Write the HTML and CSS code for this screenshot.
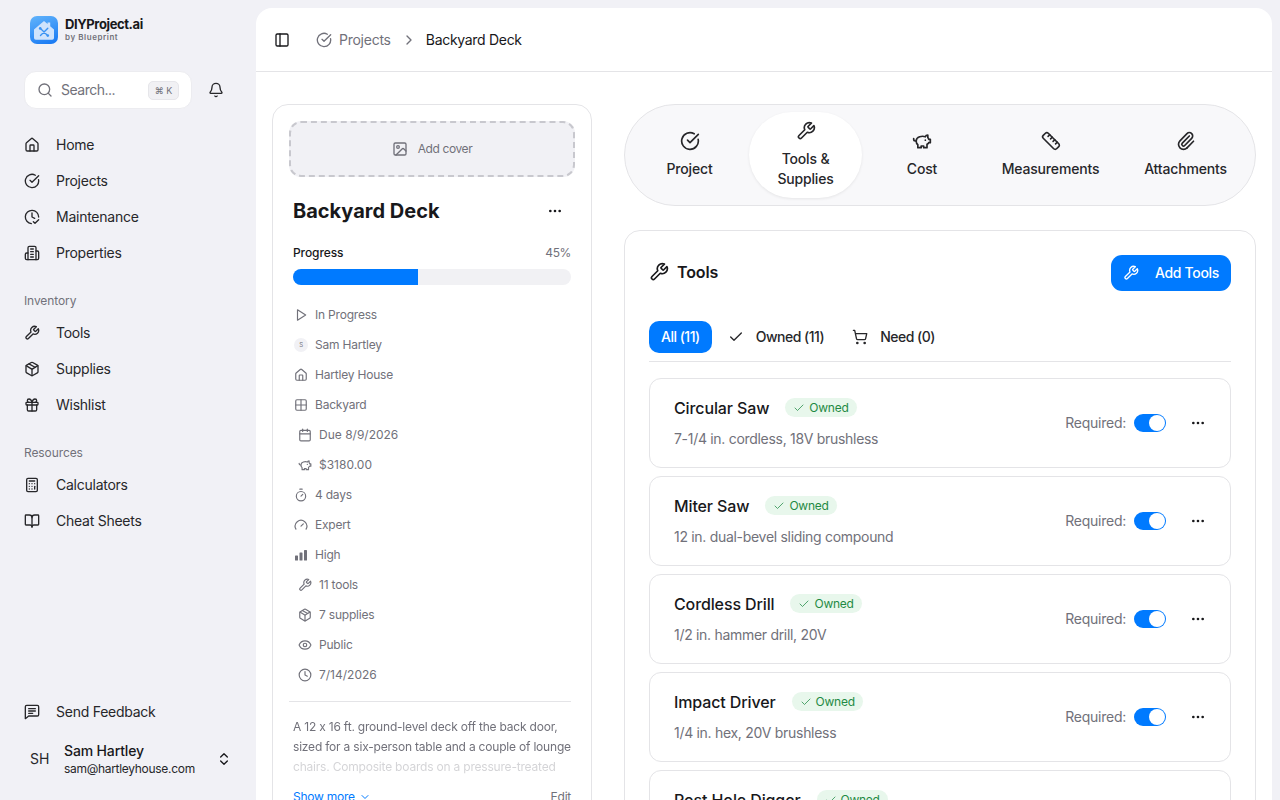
FILE: index.html
```html
<!DOCTYPE html>
<html lang="en">
<head>
  <meta charset="UTF-8">
  <title>Backyard Deck – DIYProject.ai</title>
  <link rel="stylesheet" href="styles.css">
</head>
<body>

  <!-- icon sprite -->
  <svg class="sprite" xmlns="http://www.w3.org/2000/svg">
    <symbol id="i-house" viewBox="0 0 24 24"><path d="M15 21v-8a1 1 0 0 0-1-1h-4a1 1 0 0 0-1 1v8"/><path d="M3 10a2 2 0 0 1 .709-1.528l7-5.999a2 2 0 0 1 2.582 0l7 5.999A2 2 0 0 1 21 10v9a2 2 0 0 1-2 2H5a2 2 0 0 1-2-2z"/></symbol>
    <symbol id="i-circle-check" viewBox="0 0 24 24"><path d="M21.801 10A10 10 0 1 1 17 3.335"/><path d="m9 11 3 3L22 4"/></symbol>
    <symbol id="i-clock-check" viewBox="0 0 24 24"><path d="M12 6v6l4 2"/><path d="M22 12a10 10 0 1 0-11 9.95"/><path d="m22 16-5.5 5.5L14 19"/></symbol>
    <symbol id="i-building" viewBox="0 0 24 24"><path d="M6 22V4a2 2 0 0 1 2-2h8a2 2 0 0 1 2 2v18Z"/><path d="M6 12H4a2 2 0 0 0-2 2v6a2 2 0 0 0 2 2h2"/><path d="M18 9h2a2 2 0 0 1 2 2v9a2 2 0 0 1-2 2h-2"/><path d="M10 6h4"/><path d="M10 10h4"/><path d="M10 14h4"/><path d="M10 18h4"/></symbol>
    <symbol id="i-wrench" viewBox="0 0 24 24"><path d="M14.7 6.3a1 1 0 0 0 0 1.4l1.6 1.6a1 1 0 0 0 1.4 0l3.77-3.77a6 6 0 0 1-7.94 7.94l-6.91 6.91a2.12 2.12 0 0 1-3-3l6.91-6.91a6 6 0 0 1 7.94-7.94l-3.76 3.76z"/></symbol>
    <symbol id="i-package" viewBox="0 0 24 24"><path d="M11 21.73a2 2 0 0 0 2 0l7-4A2 2 0 0 0 21 16V8a2 2 0 0 0-1-1.73l-7-4a2 2 0 0 0-2 0l-7 4A2 2 0 0 0 3 8v8a2 2 0 0 0 1 1.73z"/><path d="M12 22V12"/><path d="m3.3 7 7.703 4.734a2 2 0 0 0 1.994 0L20.7 7"/><path d="m7.5 4.27 9 5.15"/></symbol>
    <symbol id="i-gift" viewBox="0 0 24 24"><rect x="3" y="8" width="18" height="4" rx="1"/><path d="M12 8v13"/><path d="M19 12v7a2 2 0 0 1-2 2H7a2 2 0 0 1-2-2v-7"/><path d="M7.5 8a2.5 2.5 0 0 1 0-5A4.8 8 0 0 1 12 8a4.8 8 0 0 1 4.5-5 2.5 2.5 0 0 1 0 5"/></symbol>
    <symbol id="i-calculator" viewBox="0 0 24 24"><rect width="16" height="20" x="4" y="2" rx="2"/><line x1="8" x2="16" y1="6" y2="6"/><line x1="16" x2="16" y1="14" y2="18"/><path d="M16 10h.01"/><path d="M12 10h.01"/><path d="M8 10h.01"/><path d="M12 14h.01"/><path d="M8 14h.01"/><path d="M12 18h.01"/><path d="M8 18h.01"/></symbol>
    <symbol id="i-book" viewBox="0 0 24 24"><path d="M12 7v14"/><path d="M3 18a1 1 0 0 1-1-1V4a1 1 0 0 1 1-1h5a4 4 0 0 1 4 4 4 4 0 0 1 4-4h5a1 1 0 0 1 1 1v13a1 1 0 0 1-1 1h-6a3 3 0 0 0-3 3 3 3 0 0 0-3-3z"/></symbol>
    <symbol id="i-message" viewBox="0 0 24 24"><path d="M22 16a2 2 0 0 1-2 2H7l-5 4V4a2 2 0 0 1 2-2h16a2 2 0 0 1 2 2z"/><path d="M17 7H7"/><path d="M17 10.5H7"/><path d="M13 14H7"/></symbol>
    <symbol id="i-updown" viewBox="0 0 24 24"><path d="m7 15 5 5 5-5"/><path d="m7 9 5-5 5 5"/></symbol>
    <symbol id="i-bell" viewBox="0 0 24 24"><path d="M10.268 21a2 2 0 0 0 3.464 0"/><path d="M3.262 15.326A1 1 0 0 0 4 17h16a1 1 0 0 0 .74-1.673C19.41 13.956 18 12.499 18 8A6 6 0 0 0 6 8c0 4.499-1.411 5.956-2.738 7.326"/></symbol>
    <symbol id="i-search" viewBox="0 0 24 24"><circle cx="11" cy="11" r="8"/><path d="m21 21-4.3-4.3"/></symbol>
    <symbol id="i-panel" viewBox="0 0 24 24"><rect width="18" height="18" x="3" y="3" rx="2"/><path d="M9 3v18"/></symbol>
    <symbol id="i-chevron-right" viewBox="0 0 24 24"><path d="m9 18 6-6-6-6"/></symbol>
    <symbol id="i-chevron-down" viewBox="0 0 24 24"><path d="m6 9 6 6 6-6"/></symbol>
    <symbol id="i-image" viewBox="0 0 24 24"><rect width="18" height="18" x="3" y="3" rx="2"/><circle cx="9" cy="9" r="2"/><path d="m21 15-3.086-3.086a2 2 0 0 0-2.828 0L6 21"/></symbol>
    <symbol id="i-dots" viewBox="0 0 24 24"><circle cx="12" cy="12" r="1"/><circle cx="19" cy="12" r="1"/><circle cx="5" cy="12" r="1"/></symbol>
    <symbol id="i-play" viewBox="0 0 24 24"><polygon points="6 3 20 12 6 21 6 3"/></symbol>
    <symbol id="i-grid" viewBox="0 0 24 24"><path d="M12 3v18"/><path d="M3 12h18"/><rect x="3" y="3" width="18" height="18" rx="2"/></symbol>
    <symbol id="i-calendar" viewBox="0 0 24 24"><path d="M8 2v4"/><path d="M16 2v4"/><rect width="18" height="18" x="3" y="4" rx="2"/><path d="M3 10h18"/></symbol>
    <symbol id="i-piggy" viewBox="0 0 24 24"><path d="M19 5c-1.5 0-2.8 1.4-3 2-3.5-1.5-11-.3-11 5 0 1.8 0 3 2 4.5V20h4v-2h3v2h4v-4c1-.5 1.7-1 2-2h2v-4h-2c0-1-.5-1.5-1-2V5z"/><path d="M2 9v1c0 1.1.9 2 2 2h1"/><path d="M16 11h.01"/></symbol>
    <symbol id="i-timer" viewBox="0 0 24 24"><line x1="10" x2="14" y1="2" y2="2"/><line x1="12" x2="15" y1="14" y2="11"/><circle cx="12" cy="14" r="8"/></symbol>
    <symbol id="i-gauge" viewBox="0 0 24 24"><path d="m12 14 4-4"/><path d="M3.34 19a10 10 0 1 1 17.32 0"/></symbol>
    <symbol id="i-eye" viewBox="0 0 24 24"><path d="M2.062 12.348a1 1 0 0 1 0-.696 10.75 10.75 0 0 1 19.876 0 1 1 0 0 1 0 .696 10.75 10.75 0 0 1-19.876 0"/><circle cx="12" cy="12" r="3"/></symbol>
    <symbol id="i-clock" viewBox="0 0 24 24"><circle cx="12" cy="12" r="10"/><polyline points="12 6 12 12 16 14"/></symbol>
    <symbol id="i-ruler" viewBox="0 0 24 24"><path d="M21.3 15.3a2.4 2.4 0 0 1 0 3.4l-2.6 2.6a2.4 2.4 0 0 1-3.4 0L2.7 8.7a2.41 2.41 0 0 1 0-3.4l2.6-2.6a2.41 2.41 0 0 1 3.4 0Z"/><path d="m14.5 12.5 2-2"/><path d="m11.5 9.5 2-2"/><path d="m8.5 6.5 2-2"/><path d="m17.5 15.5 2-2"/></symbol>
    <symbol id="i-clip" viewBox="0 0 24 24"><path d="M13.234 20.252 21 12.3"/><path d="m16 6-8.414 8.586a2 2 0 0 0 0 2.828 2 2 0 0 0 2.828 0l8.414-8.586a4 4 0 0 0 0-5.656 4 4 0 0 0-5.656 0l-8.415 8.585a6 6 0 1 0 8.486 8.486"/></symbol>
    <symbol id="i-check" viewBox="0 0 24 24"><path d="M20 6 9 17l-5-5"/></symbol>
    <symbol id="i-cart" viewBox="0 0 24 24"><circle cx="8" cy="21" r="1"/><circle cx="19" cy="21" r="1"/><path d="M2.05 2.05h2l2.66 12.42a2 2 0 0 0 2 1.58h9.78a2 2 0 0 0 1.95-1.57l1.65-7.43H5.12"/></symbol>
  </svg>

  <aside class="sidebar">
    <div class="brand">
      <div class="brand-logo">
        <svg viewBox="0 0 28 28" width="28" height="28">
          <path d="M14 5l3.6 3V6.6h2.6v3.6L24 13.4V22a1.8 1.8 0 0 1-1.8 1.8H5.8A1.8 1.8 0 0 1 4 22v-8.6z" fill="#cfe3fc"/>
          <path d="M10.5 12.5l7 7M17.8 12.2l-7.3 7.3" stroke="#3a93f4" stroke-width="1.4" stroke-linecap="round"/>
          <circle cx="10.2" cy="12.4" r="1.3" fill="#3a93f4"/>
          <circle cx="17.8" cy="19.6" r="1.3" fill="#3a93f4"/>
        </svg>
      </div>
      <div>
        <div class="brand-name">DIYProject.ai</div>
        <div class="brand-sub">by Blueprint</div>
      </div>
    </div>

    <div class="search-row">
      <div class="search">
        <svg class="icon"><use href="#i-search"/></svg>
        <span class="search-text">Search...</span>
        <kbd>⌘ K</kbd>
      </div>
      <svg class="icon bell"><use href="#i-bell"/></svg>
    </div>

    <nav class="nav nav-main">
      <a class="nav-item"><svg class="icon"><use href="#i-house"/></svg>Home</a>
      <a class="nav-item"><svg class="icon"><use href="#i-circle-check"/></svg>Projects</a>
      <a class="nav-item"><svg class="icon"><use href="#i-clock-check"/></svg>Maintenance</a>
      <a class="nav-item"><svg class="icon"><use href="#i-building"/></svg>Properties</a>
    </nav>

    <div class="nav-label">Inventory</div>
    <nav class="nav">
      <a class="nav-item"><svg class="icon"><use href="#i-wrench"/></svg>Tools</a>
      <a class="nav-item"><svg class="icon"><use href="#i-package"/></svg>Supplies</a>
      <a class="nav-item"><svg class="icon"><use href="#i-gift"/></svg>Wishlist</a>
    </nav>

    <div class="nav-label">Resources</div>
    <nav class="nav">
      <a class="nav-item"><svg class="icon"><use href="#i-calculator"/></svg>Calculators</a>
      <a class="nav-item"><svg class="icon"><use href="#i-book"/></svg>Cheat Sheets</a>
    </nav>

    <div class="sidebar-bottom">
      <a class="nav-item"><svg class="icon"><use href="#i-message"/></svg>Send Feedback</a>
      <div class="user">
        <span class="user-initials">SH</span>
        <div class="user-info">
          <div class="user-name">Sam Hartley</div>
          <div class="user-mail">sam@hartleyhouse.com</div>
        </div>
        <svg class="icon"><use href="#i-updown"/></svg>
      </div>
    </div>
  </aside>

  <main class="panel">
    <header class="topbar">
      <svg class="icon topbar-toggle"><use href="#i-panel"/></svg>
      <svg class="icon crumb-icon"><use href="#i-circle-check"/></svg>
      <span class="crumb">Projects</span>
      <svg class="icon crumb-sep"><use href="#i-chevron-right"/></svg>
      <span class="crumb-current">Backyard Deck</span>
    </header>

    <div class="content">
      <!-- project summary -->
      <section class="summary">
        <div class="cover"><svg class="icon"><use href="#i-image"/></svg>Add cover</div>

        <div class="summary-head">
          <h1>Backyard Deck</h1>
          <svg class="icon dots"><use href="#i-dots"/></svg>
        </div>

        <div class="progress-head"><span>Progress</span><span class="progress-val">45%</span></div>
        <div class="progress"><div class="progress-fill" style="width: 45%"></div></div>

        <ul class="meta">
          <li><svg class="icon"><use href="#i-play"/></svg>In Progress</li>
          <li><span class="mini-avatar">S</span>Sam Hartley</li>
          <li><svg class="icon"><use href="#i-house"/></svg>Hartley House</li>
          <li><svg class="icon"><use href="#i-grid"/></svg>Backyard</li>
          <li class="inset num"><svg class="icon"><use href="#i-calendar"/></svg>Due 8/9/2026</li>
          <li class="inset num"><svg class="icon"><use href="#i-piggy"/></svg>$3180.00</li>
          <li><svg class="icon"><use href="#i-timer"/></svg>4 days</li>
          <li><svg class="icon"><use href="#i-gauge"/></svg>Expert</li>
          <li>
            <svg class="icon bars" viewBox="0 0 14 14"><rect x="1" y="7.5" width="3" height="5" rx=".6"/><rect x="5.5" y="4.5" width="3" height="8" rx=".6"/><rect x="10" y="2" width="3" height="10.5" rx=".6"/></svg>
            High
          </li>
          <li class="inset"><svg class="icon"><use href="#i-wrench"/></svg>11 tools</li>
          <li class="inset"><svg class="icon"><use href="#i-package"/></svg>7 supplies</li>
          <li class="inset"><svg class="icon"><use href="#i-eye"/></svg>Public</li>
          <li class="inset num"><svg class="icon"><use href="#i-clock"/></svg>7/14/2026</li>
        </ul>

        <p class="desc">A 12 x 16 ft. ground-level deck off the back door, sized for a six-person table and a couple of lounge chairs. Composite boards on a pressure-treated</p>

        <div class="summary-foot">
          <a class="show-more">Show more <svg class="icon"><use href="#i-chevron-down"/></svg></a>
          <a class="edit">Edit</a>
        </div>
      </section>

      <div class="detail">
        <!-- section tabs -->
        <div class="tabs">
          <div class="tab"><svg class="icon"><use href="#i-circle-check"/></svg>Project</div>
          <div class="tab active"><svg class="icon"><use href="#i-wrench"/></svg>Tools &amp;<br>Supplies</div>
          <div class="tab"><svg class="icon"><use href="#i-piggy"/></svg>Cost</div>
          <div class="tab"><svg class="icon"><use href="#i-ruler"/></svg>Measurements</div>
          <div class="tab"><svg class="icon"><use href="#i-clip"/></svg>Attachments</div>
        </div>

        <section class="tools">
          <div class="tools-head">
            <h2><svg class="icon"><use href="#i-wrench"/></svg>Tools</h2>
            <button class="add-btn"><svg class="icon"><use href="#i-wrench"/></svg>Add Tools</button>
          </div>

          <div class="filters">
            <span class="filter on">All (11)</span>
            <span class="filter"><svg class="icon"><use href="#i-check"/></svg>Owned (11)</span>
            <span class="filter"><svg class="icon"><use href="#i-cart"/></svg>Need (0)</span>
          </div>

          <div class="tool-list">
            <article class="tool">
              <div class="tool-main">
                <div class="tool-title"><h3>Circular Saw</h3><span class="badge"><svg class="icon"><use href="#i-check"/></svg>Owned</span></div>
                <div class="tool-desc">7-1/4 in. cordless, 18V brushless</div>
              </div>
              <span class="req">Required:</span><span class="switch"></span>
              <svg class="icon dots"><use href="#i-dots"/></svg>
            </article>
            <article class="tool">
              <div class="tool-main">
                <div class="tool-title"><h3>Miter Saw</h3><span class="badge"><svg class="icon"><use href="#i-check"/></svg>Owned</span></div>
                <div class="tool-desc">12 in. dual-bevel sliding compound</div>
              </div>
              <span class="req">Required:</span><span class="switch"></span>
              <svg class="icon dots"><use href="#i-dots"/></svg>
            </article>
            <article class="tool">
              <div class="tool-main">
                <div class="tool-title"><h3>Cordless Drill</h3><span class="badge"><svg class="icon"><use href="#i-check"/></svg>Owned</span></div>
                <div class="tool-desc">1/2 in. hammer drill, 20V</div>
              </div>
              <span class="req">Required:</span><span class="switch"></span>
              <svg class="icon dots"><use href="#i-dots"/></svg>
            </article>
            <article class="tool">
              <div class="tool-main">
                <div class="tool-title"><h3>Impact Driver</h3><span class="badge"><svg class="icon"><use href="#i-check"/></svg>Owned</span></div>
                <div class="tool-desc">1/4 in. hex, 20V brushless</div>
              </div>
              <span class="req">Required:</span><span class="switch"></span>
              <svg class="icon dots"><use href="#i-dots"/></svg>
            </article>
            <article class="tool">
              <div class="tool-main">
                <div class="tool-title"><h3>Post Hole Digger</h3><span class="badge"><svg class="icon"><use href="#i-check"/></svg>Owned</span></div>
                <div class="tool-desc">Manual, fiberglass handles</div>
              </div>
              <span class="req">Required:</span><span class="switch"></span>
              <svg class="icon dots"><use href="#i-dots"/></svg>
            </article>
          </div>
        </section>
      </div>
    </div>
  </main>

</body>
</html>
```

FILE: styles.css
```css
:root {
  --bg: #f1f1f6;
  --text: #18181b;
  --nav-text: #27272a;
  --muted: #71717a;
  --line: #e4e4e7;
  --accent: #007aff;
}

* { box-sizing: border-box; }

html, body {
  height: 100%;
  margin: 0;
  overflow: hidden;
}

body {
  display: flex;
  font-family: Inter, "Noto Sans", sans-serif;
  font-size: 14px;
  line-height: 20px;
  letter-spacing: -0.25px;
  font-feature-settings: "calt" 0;
  background: var(--bg);
  color: var(--text);
}

.sprite { display: none; }

.icon {
  width: 16px;
  height: 16px;
  flex: none;
  fill: none;
  stroke: currentColor;
  stroke-width: 2;
  stroke-linecap: round;
  stroke-linejoin: round;
}

/* sidebar */
.sidebar {
  width: 256px;
  flex: none;
  height: 800px;
  padding: 16px 24px 17px;
  display: flex;
  flex-direction: column;
}

.brand {
  display: flex;
  align-items: center;
  gap: 7px;
  height: 28px;
  margin-left: 6px;
}

.brand-logo {
  width: 28px;
  height: 28px;
  border-radius: 7px;
  background: linear-gradient(160deg, #62b4fb, #1577f3);
}

.brand-logo svg { display: block; }

.brand-name {
  font-size: 13px;
  font-weight: 700;
  line-height: 15px;
  letter-spacing: -0.4px;
}

.brand-sub {
  font-size: 8px;
  font-weight: 600;
  line-height: 11px;
  letter-spacing: 0.55px;
  color: var(--muted);
}

.search-row {
  display: flex;
  align-items: center;
  margin-top: 27px;
}

.search {
  width: 168px;
  height: 38px;
  display: flex;
  align-items: center;
  padding: 0 12px 0 12px;
  background: #fff;
  border: 1px solid #ececf0;
  border-radius: 12px;
  color: var(--muted);
}

.search-text {
  flex: 1;
  margin-left: 8px;
  letter-spacing: -0.5px;
}

kbd {
  width: 31px;
  height: 19px;
  font-family: inherit;
  font-size: 9px;
  line-height: 17px;
  letter-spacing: 0;
  text-align: center;
  background: #f1f1f4;
  border: 1px solid #e6e6ea;
  border-radius: 5px;
}

.bell {
  margin-left: 16px;
  color: var(--nav-text);
}

.nav-main { margin-top: 18px; }

.nav-item {
  height: 36px;
  display: flex;
  align-items: center;
  gap: 16px;
  color: var(--nav-text);
}

.nav-label {
  margin: 22px 0 6px;
  font-size: 12px;
  line-height: 16px;
  letter-spacing: -0.1px;
  color: var(--muted);
}

.sidebar-bottom { margin-top: auto; }

.user {
  height: 48px;
  margin-top: 5px;
  display: flex;
  align-items: center;
  padding-left: 6px;
}

.user-initials {
  width: 34px;
  letter-spacing: 0;
  color: var(--nav-text);
}

.user-info { flex: 1; }

.user-name {
  font-weight: 500;
  line-height: 20px;
  letter-spacing: -0.15px;
}

.user-mail {
  font-size: 12px;
  line-height: 16px;
  letter-spacing: -0.3px;
  color: var(--nav-text);
}

/* main panel */
.panel {
  flex: 1;
  min-width: 0;
  margin: 8px 8px 0 0;
  background: #fff;
  border-radius: 16px 16px 0 0;
  overflow: hidden;
}

.topbar {
  height: 64px;
  display: flex;
  align-items: center;
  padding: 0 18px;
  border-bottom: 1px solid var(--line);
}

.crumb-icon {
  margin-left: 26px;
  color: var(--muted);
}

.crumb {
  margin-left: 7px;
  color: var(--muted);
}

.crumb-sep {
  margin: 0 9px 0 10px;
  color: var(--muted);
}

.crumb-current { letter-spacing: -0.3px; }

.content {
  display: flex;
  align-items: flex-start;
  gap: 32px;
  padding: 32px 16px;
}

/* left summary card */
.summary {
  width: 320px;
  flex: none;
  padding: 16px 20px 16px 16px;
  border: 1px solid var(--line);
  border-radius: 16px;
}

.cover {
  width: 286px;
  height: 56px;
  display: flex;
  align-items: center;
  justify-content: center;
  gap: 10px;
  font-size: 12px;
  line-height: 16px;
  letter-spacing: -0.4px;
  color: var(--muted);
  background: #f1f1f5;
  border: 2px dashed #c8c8ce;
  border-radius: 12px;
}

.summary-head {
  display: flex;
  align-items: center;
  justify-content: space-between;
  margin: 20px 0 20px 4px;
  padding-right: 8px;
}

h1 {
  margin: 0;
  font-size: 20px;
  line-height: 28px;
  font-weight: 700;
  letter-spacing: 0;
}

.progress-head {
  display: flex;
  justify-content: space-between;
  margin-left: 4px;
  font-size: 12px;
  line-height: 16px;
  font-weight: 500;
  letter-spacing: -0.1px;
}

.progress-val {
  font-weight: 400;
  letter-spacing: -0.4px;
  color: var(--muted);
}

.progress {
  height: 16px;
  margin: 8px 0 0 4px;
  background: #f1f1f4;
  border-radius: 8px;
  overflow: hidden;
}

.progress-fill {
  height: 100%;
  background: var(--accent);
}

.meta {
  list-style: none;
  margin: 15px 0 0;
  padding: 0 0 11px 5px;
  border-bottom: 1px solid var(--line);
}

.meta li {
  height: 30px;
  display: flex;
  align-items: center;
  gap: 7px;
  font-size: 12px;
  line-height: 16px;
  letter-spacing: -0.2px;
  color: var(--muted);
}

.meta .icon {
  width: 14px;
  height: 14px;
}

.meta .inset { padding-left: 4px; }

.meta .num { letter-spacing: 0; }

.meta .bars {
  fill: currentColor;
  stroke: none;
}

.mini-avatar {
  width: 14px;
  height: 14px;
  font-size: 6px;
  line-height: 14px;
  text-align: center;
  background: #f1f1f5;
  border-radius: 50%;
}

.desc {
  margin: 15px 0 0 4px;
  font-size: 12px;
  line-height: 20px;
  letter-spacing: -0.2px;
  color: var(--muted);
  -webkit-mask-image: linear-gradient(to bottom, #000 60%, rgba(0, 0, 0, 0.3) 72%);
  mask-image: linear-gradient(to bottom, #000 60%, rgba(0, 0, 0, 0.3) 72%);
}

.summary-foot {
  display: flex;
  justify-content: space-between;
  align-items: center;
  margin: 10px 0 0 4px;
  font-size: 12px;
  line-height: 20px;
  color: var(--muted);
}

.show-more {
  display: flex;
  align-items: center;
  gap: 4px;
  color: var(--accent);
}

.show-more .icon {
  width: 12px;
  height: 12px;
}

/* right column */
.detail {
  flex: 1;
  min-width: 0;
}

.tabs {
  height: 102px;
  display: grid;
  grid-template-columns: 119px 113px 120px 137px 133px;
  justify-content: start;
  align-items: center;
  padding-left: 5px;
  background: #f8f8fa;
  border: 1px solid var(--line);
  border-radius: 51px;
}

.tab {
  display: flex;
  flex-direction: column;
  align-items: center;
  font-weight: 500;
  line-height: 20px;
  letter-spacing: -0.17px;
  text-align: center;
  color: var(--nav-text);
}

.tab .icon {
  width: 20px;
  height: 20px;
  margin-bottom: 8px;
}

.tab.active {
  display: block;
  height: 86px;
  padding-top: 9px;
  background: #fff;
  border-radius: 43px;
  box-shadow: 0 1px 3px rgba(0, 0, 0, 0.08);
}

.tab.active .icon {
  display: block;
  margin: 0 auto 8px;
}

.tools {
  margin-top: 24px;
  padding: 24px;
  border: 1px solid var(--line);
  border-radius: 16px;
}

.tools-head {
  display: flex;
  align-items: center;
  justify-content: space-between;
}

h2 {
  display: flex;
  align-items: center;
  gap: 8px;
  margin: 0 0 2px;
  font-size: 16px;
  line-height: 24px;
  font-weight: 600;
  letter-spacing: -0.1px;
}

h2 .icon {
  width: 20px;
  height: 20px;
}

.add-btn {
  width: 120px;
  height: 36px;
  display: flex;
  align-items: center;
  gap: 16px;
  padding: 0 0 0 12px;
  font-family: inherit;
  font-size: 14px;
  line-height: 20px;
  font-weight: 500;
  letter-spacing: -0.33px;
  color: #fff;
  background: var(--accent);
  border: none;
  border-radius: 11px;
}

.filters {
  display: flex;
  align-items: center;
  gap: 4px;
  margin-top: 30px;
  padding-bottom: 8px;
  border-bottom: 1px solid var(--line);
}

.filter {
  height: 32px;
  display: flex;
  align-items: center;
  gap: 12px;
  padding: 0 12px;
  font-weight: 500;
  letter-spacing: -0.5px;
  color: var(--nav-text);
  border-radius: 10px;
}

.filter.on {
  color: #fff;
  background: var(--accent);
}

.tool-list {
  display: flex;
  flex-direction: column;
  gap: 8px;
  margin-top: 16px;
}

.tool {
  height: 90px;
  display: flex;
  align-items: center;
  padding: 0 24px;
  border: 1px solid var(--line);
  border-radius: 12px;
}

.tool-main {
  flex: 1;
  padding-bottom: 2px;
}

.tool-title {
  display: flex;
  align-items: center;
  gap: 16px;
}

h3 {
  margin: 0;
  font-size: 16px;
  font-weight: 500;
  line-height: 24px;
  letter-spacing: -0.12px;
}

.badge {
  height: 19px;
  display: flex;
  align-items: center;
  gap: 4px;
  padding: 1px 8px 0;
  font-size: 12px;
  line-height: 16px;
  color: #1f8a44;
  background: #e8f7ec;
  border-radius: 10px;
}

.badge .icon {
  width: 12px;
  height: 12px;
  stroke-width: 1.5;
}

.tool-desc {
  margin-top: 9px;
  line-height: 20px;
  letter-spacing: -0.3px;
  color: var(--muted);
}

.req {
  color: var(--muted);
}

.switch {
  position: relative;
  width: 32px;
  height: 18px;
  margin: 0 24px 0 8px;
  background: var(--accent);
  border-radius: 9px;
}

.switch::after {
  content: "";
  position: absolute;
  top: 1px;
  right: 1px;
  width: 16px;
  height: 16px;
  background: #fff;
  border-radius: 50%;
}

.dots {
  color: var(--text);
}
```
